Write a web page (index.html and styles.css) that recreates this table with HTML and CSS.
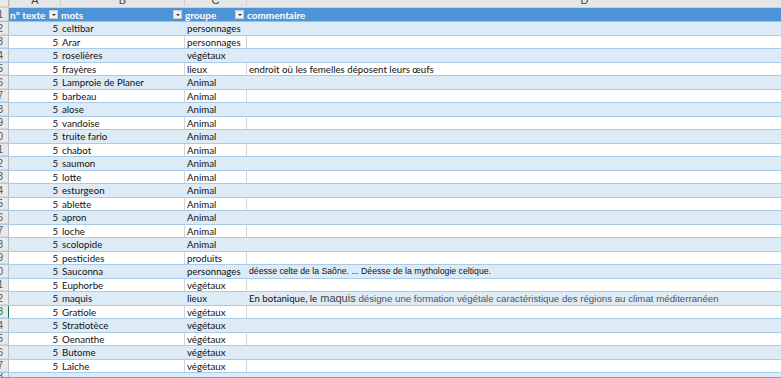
FILE: index.html
```html
<!DOCTYPE html>
<html lang="fr">
<head>
<meta charset="utf-8">
<link rel="stylesheet" href="styles.css">
</head>
<body>
<div class="sheet">
  <div class="row colhead">
    <div class="rn"></div>
    <div class="cl">A</div>
    <div class="cl">B</div>
    <div class="cl">C</div>
    <div class="cl">D</div>
  </div>
  <div class="row thead">
    <div class="rn"><span>1</span></div>
    <div class="th">n° texte<span class="flt"></span></div>
    <div class="th">mots<span class="flt"></span></div>
    <div class="th">groupe<span class="flt"></span></div>
    <div class="th">commentaire</div>
  </div>
  <div class="row band"><div class="rn"><span>2</span></div><div class="num">5</div><div class="tx">celtibar</div><div class="tx c">personnages</div><div class="tx d"></div></div>
  <div class="row"><div class="rn"><span>3</span></div><div class="num">5</div><div class="tx">Arar</div><div class="tx c">personnages</div><div class="tx d"></div></div>
  <div class="row band"><div class="rn"><span>4</span></div><div class="num">5</div><div class="tx">roselières</div><div class="tx c">végétaux</div><div class="tx d"></div></div>
  <div class="row"><div class="rn"><span>5</span></div><div class="num">5</div><div class="tx">frayères</div><div class="tx c">lieux</div><div class="tx d">endroit où les femelles déposent leurs œufs</div></div>
  <div class="row band"><div class="rn"><span>6</span></div><div class="num">5</div><div class="tx">Lamproie de Planer</div><div class="tx c">Animal</div><div class="tx d"></div></div>
  <div class="row"><div class="rn"><span>7</span></div><div class="num">5</div><div class="tx">barbeau</div><div class="tx c">Animal</div><div class="tx d"></div></div>
  <div class="row band"><div class="rn"><span>8</span></div><div class="num">5</div><div class="tx">alose</div><div class="tx c">Animal</div><div class="tx d"></div></div>
  <div class="row"><div class="rn"><span>9</span></div><div class="num">5</div><div class="tx">vandoise</div><div class="tx c">Animal</div><div class="tx d"></div></div>
  <div class="row band"><div class="rn"><span>10</span></div><div class="num">5</div><div class="tx">truite fario</div><div class="tx c">Animal</div><div class="tx d"></div></div>
  <div class="row"><div class="rn"><span>11</span></div><div class="num">5</div><div class="tx">chabot</div><div class="tx c">Animal</div><div class="tx d"></div></div>
  <div class="row band"><div class="rn"><span>12</span></div><div class="num">5</div><div class="tx">saumon</div><div class="tx c">Animal</div><div class="tx d"></div></div>
  <div class="row"><div class="rn"><span>13</span></div><div class="num">5</div><div class="tx">lotte</div><div class="tx c">Animal</div><div class="tx d"></div></div>
  <div class="row band"><div class="rn"><span>14</span></div><div class="num">5</div><div class="tx">esturgeon</div><div class="tx c">Animal</div><div class="tx d"></div></div>
  <div class="row"><div class="rn"><span>15</span></div><div class="num">5</div><div class="tx">ablette</div><div class="tx c">Animal</div><div class="tx d"></div></div>
  <div class="row band"><div class="rn"><span>16</span></div><div class="num">5</div><div class="tx">apron</div><div class="tx c">Animal</div><div class="tx d"></div></div>
  <div class="row"><div class="rn"><span>17</span></div><div class="num">5</div><div class="tx">loche</div><div class="tx c">Animal</div><div class="tx d"></div></div>
  <div class="row band"><div class="rn"><span>18</span></div><div class="num">5</div><div class="tx">scolopide</div><div class="tx c">Animal</div><div class="tx d"></div></div>
  <div class="row"><div class="rn"><span>19</span></div><div class="num">5</div><div class="tx">pesticides</div><div class="tx c">produits</div><div class="tx d"></div></div>
  <div class="row band"><div class="rn"><span>20</span></div><div class="num">5</div><div class="tx">Sauconna</div><div class="tx c">personnages</div><div class="tx d web">déesse celte de la Saône. ... Déesse de la mythologie celtique.</div></div>
  <div class="row"><div class="rn"><span>21</span></div><div class="num">5</div><div class="tx">Euphorbe</div><div class="tx c">végétaux</div><div class="tx d"></div></div>
  <div class="row band"><div class="rn"><span>22</span></div><div class="num">5</div><div class="tx">maquis</div><div class="tx c">lieux</div><div class="tx d">En botanique, le <span class="g"><b>maquis</b> désigne une formation végétale caractéristique des régions au climat méditerranéen</span></div></div>
  <div class="row"><div class="rn sel"><span>23</span></div><div class="num">5</div><div class="tx">Gratiole</div><div class="tx c">végétaux</div><div class="tx d"></div></div>
  <div class="row band"><div class="rn"><span>24</span></div><div class="num">5</div><div class="tx">Stratiotèce</div><div class="tx c">végétaux</div><div class="tx d"></div></div>
  <div class="row"><div class="rn"><span>25</span></div><div class="num">5</div><div class="tx">Oenanthe</div><div class="tx c">végétaux</div><div class="tx d"></div></div>
  <div class="row band"><div class="rn"><span>26</span></div><div class="num">5</div><div class="tx">Butome</div><div class="tx c">végétaux</div><div class="tx d"></div></div>
  <div class="row"><div class="rn"><span>27</span></div><div class="num">5</div><div class="tx">Laîche</div><div class="tx c">végétaux</div><div class="tx d"></div></div>
  <div class="row band last"><div class="rn"><span>28</span></div><div class="num"></div><div class="tx"></div><div class="tx c"></div><div class="tx d"></div></div>
</div>
</body>
</html>
```

FILE: styles.css
```css
html, body {
  margin: 0;
  padding: 0;
  background: #ffffff;
  overflow: hidden;
  height: 378px;
}
.sheet {
  width: 781px;
  height: 378px;
  overflow: hidden;
  font-family: Lato, "Liberation Sans", sans-serif;
  font-size: 9.7px;
  color: #111;
  border-bottom: 1px solid #9a9a9a;
  box-sizing: border-box;
}
.row {
  display: grid;
  grid-template-columns: 9px 51px 124px 62px 676px;
  height: 13.5px;
  box-sizing: border-box;
  border-bottom: 1px solid #a9cbea;
  background: #ffffff;
}
.row.band { background: #ddebf7; }
.row.last { height: 6px; border-bottom: 0; }
.row > div {
  overflow: hidden;
  white-space: nowrap;
  display: flex;
  align-items: center;
  box-sizing: border-box;
}
.colhead {
  height: 8px;
  background: #e6e6e6;
  border-bottom: 1px solid #d0d0d0;
}
.colhead .cl {
  justify-content: center;
  align-items: flex-end;
  color: #444;
  font-family: "Liberation Sans", sans-serif;
  font-size: 11px;
  line-height: 11px;
  border-left: 1px solid #d0d0d0;
  transform: translateY(-1px);
}
.thead {
  height: 14px;
  background: #4d94d9;
  border-bottom: 1px solid #9bc2e6;
}
.th {
  color: #fff;
  font-weight: bold;
  font-size: 10px;
  padding-left: 1px;
  position: relative;
}
.th .flt {
  position: absolute;
  right: 2px;
  top: 2px;
  width: 9px;
  height: 9px;
  box-sizing: border-box;
  background: #f2f2f2;
  border: 1px solid #c9c9c9;
}
.th .flt::after {
  content: "";
  position: absolute;
  left: 2px;
  top: 3px;
  border-left: 2px solid transparent;
  border-right: 2px solid transparent;
  border-top: 2px solid #333;
}
.rn {
  background: #e9e9e9;
  border-right: 1px solid #bdbdbd;
  justify-content: flex-end;
  color: #555;
  font-family: "Liberation Sans", sans-serif;
  font-size: 10px;
}
.rn span { margin-right: 5px; }
.thead .rn { background: #e4e8ed; }
.rn.sel { color: #217346; border-right: 1px solid #217346; }
.row .rn { box-shadow: inset 0 -1px 0 #d6d6d6; }
.num { justify-content: flex-end; padding-right: 2px; }
.tx { padding-left: 2px; }
.c, .d { border-left: 1px solid transparent; }
.row:not(.band):not(.thead):not(.colhead) .c,
.row:not(.band):not(.thead):not(.colhead) .d { border-left-color: #d4d4d4; }
.web {
  font-family: "Liberation Sans", Arial, sans-serif;
  font-size: 8.7px;
}
.g {
  color: #545454;
  font-family: "Liberation Sans", Arial, sans-serif;
  font-size: 9.7px;
  margin-left: 3px;
}
.g b { font-weight: normal; font-size: 11px; color: #444; }
```
